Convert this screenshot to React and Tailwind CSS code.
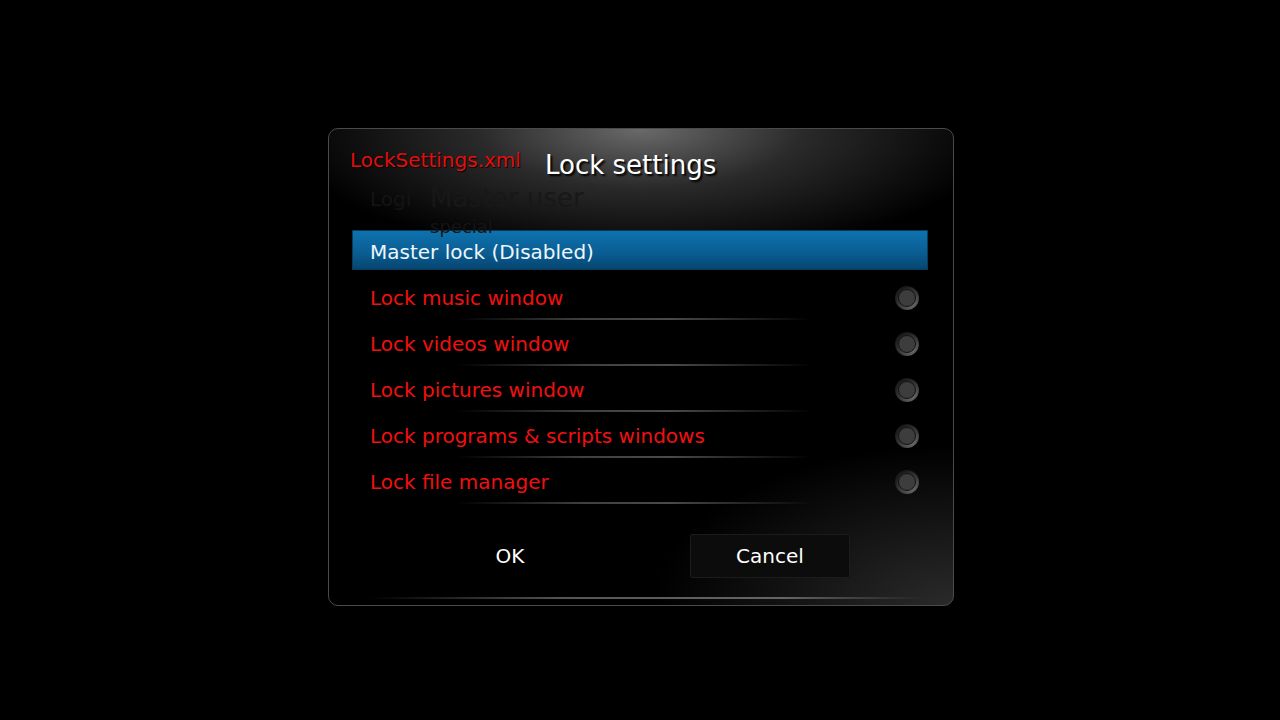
const items = [
  'Lock music window',
  'Lock videos window',
  'Lock pictures window',
  'Lock programs & scripts windows',
  'Lock file manager',
]

function Separator() {
  return (
    <div className="h-[2px] w-full bg-[linear-gradient(90deg,transparent_18%,#5a5a5a_40%,#6a6a6a_55%,transparent_80%)] opacity-70" />
  )
}

function Radio() {
  return (
    <div className="w-[24px] h-[24px] rounded-full bg-[radial-gradient(circle_at_65%_70%,#777,#1a1a1a_72%)] flex items-center justify-center">
      <div className="w-[18px] h-[18px] rounded-full bg-[#3d3d3d] border border-[#121212]" />
    </div>
  )
}

export default function App() {
  return (
    <div className="w-[1280px] h-[720px] bg-black flex items-start pl-[328px] pt-[128px] font-['DejaVu_Sans',sans-serif]">
      <div className="w-[626px] h-[478px] rounded-[10px] border border-[#4a4a4a] bg-black bg-[radial-gradient(ellipse_360px_130px_at_50%_0%,#6a6a6a,#2a2a2a_45%,transparent_100%),radial-gradient(ellipse_300px_160px_at_100%_100%,#2a2a2a,transparent_100%)] flex flex-col relative overflow-hidden">
        <div className="h-[101px] relative">
          <div className="absolute left-[21px] top-[16px] text-[20px] text-[#e01010] [text-shadow:1px_1px_1px_#000]">LockSettings.xml</div>
          <div className="absolute left-[216px] top-[17px] text-[26px] text-white [text-shadow:2px_2px_2px_#000]">Lock settings</div>
          <div className="absolute left-[41px] top-[55px] text-[20px] text-[#141414]">Logi</div>
          <div className="absolute left-[101px] top-[50px] text-[26px] text-[#181818]">Master user</div>
          <div className="absolute left-[101px] top-[84px] text-[18px] text-[#141414]">special</div>
        </div>
        <div className="pl-[23px] pr-[25px] flex flex-col">
          <div className="h-[40px] border border-[#0a3a5a] bg-[linear-gradient(180deg,#0e72ae_0%,#0a5e94_55%,#064672_100%)] flex items-center px-[17px] pt-[3px] text-[20px] text-[#eef6fb]">
            Master lock (Disabled)
          </div>
          <div className="h-[8px]" />
          {items.map((t) => (
            <div key={t} className="flex flex-col">
              <div className="h-[40px] flex items-center justify-between pl-[18px] pr-[9px]">
                <span className="text-[20px] text-[#f01010]">{t}</span>
                <Radio />
              </div>
              <Separator />
              <div className="h-[4px]" />
            </div>
          ))}
        </div>
        <div className="flex items-center mt-[26px]">
          <div className="w-[80px] ml-[141px] h-[44px] flex items-center justify-center text-[20px] text-white bg-[linear-gradient(90deg,transparent,#444,transparent)_top/100%_1px_no-repeat,linear-gradient(90deg,transparent,#444,transparent)_bottom/100%_1px_no-repeat]">
            OK
          </div>
          <div className="w-[160px] ml-[140px] h-[44px] flex items-center justify-center text-[20px] text-white bg-[#0c0c0c] border border-[#1c1c1c] rounded-[2px]">
            Cancel
          </div>
        </div>
        <div className="absolute left-[40px] right-[30px] bottom-[6px] h-[2px] bg-[linear-gradient(90deg,transparent,#555_35%,#666_75%,transparent)]" />
      </div>
    </div>
  )
}
